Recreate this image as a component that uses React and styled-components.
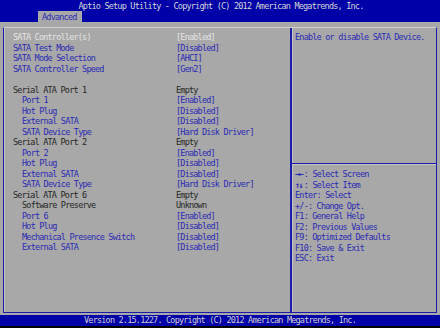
import React from "react";
import styled, { createGlobalStyle } from "styled-components";

const GlobalStyle = createGlobalStyle`
  html, body {
    margin: 0;
    padding: 0;
    background: #000;
  }
  body {
    font-family: "DejaVu Sans Mono", "Liberation Mono", monospace;
  }
`;

const BLUE = "#0000a8";
const GRAY = "#a8a8a8";
const LINK = "#2a2ab4";
const LINE = "#1c1caa";

const Screen = styled.div`
  width: 440px;
  height: 328px;
  display: flex;
  flex-direction: column;
  background: ${GRAY};
  font-size: 8.5px;
  letter-spacing: -0.8px;
  line-height: 10.5px;
  overflow: hidden;
`;

const Header = styled.div`
  background: ${BLUE};
  height: 22px;
  display: flex;
  flex-direction: column;
`;

const Title = styled.div`
  height: 11px;
  line-height: 13px;
  text-align: center;
  color: #d6d6d6;
  padding-left: 2px;
`;

const Tabs = styled.div`
  height: 11px;
  display: flex;
  padding-left: 38px;
`;

const Tab = styled.div`
  background: ${GRAY};
  color: ${LINK};
  padding: 0 4px;
  line-height: 12px;
  width: 36px;
`;

const Body = styled.div`
  flex: 1;
  padding: 5px 3px 2px 3px;
  display: flex;
`;

const Frame = styled.div`
  flex: 1;
  display: flex;
  border: 1px solid ${LINE};
  border-top-color: #cfcfcf;
  box-shadow: inset 1px 0 0 #c4c4c4;
`;

const LeftPanel = styled.div`
  width: 288px;
  padding: 4px 0 0 9px;
  border-right: 2px solid ${LINE};
  box-shadow: 1px 0 0 #c4c4c4;
  box-sizing: border-box;
`;

const Row = styled.div`
  display: grid;
  grid-template-columns: 163px 1fr;
  height: 10.5px;
  white-space: nowrap;
`;

const tone = {
  selected: "#e4e4e4",
  link: LINK,
  plain: "#262626",
};

const Label = styled.span`
  color: ${(p) => tone[p.$kind]};
  padding-left: ${(p) => (p.$indent ? 9 : 0)}px;
`;

const Value = styled.span`
  color: ${(p) => tone[p.$kind]};
`;

const RightPanel = styled.div`
  flex: 1;
  display: flex;
  flex-direction: column;
  padding-left: 3px;
`;

const Help = styled.div`
  color: ${LINK};
  padding-top: 4px;
  height: 131px;
  border-bottom: 1px solid ${LINE};
  box-shadow: 0 1px 0 #c4c4c4;
  margin-left: -3px;
  padding-left: 3px;
`;

const Keys = styled.div`
  color: ${LINK};
  padding-top: 5px;
`;

const KeyLine = styled.div`
  height: 10.5px;
  white-space: nowrap;
`;

const Arrows = styled.b`
  font-weight: bold;
  letter-spacing: -1.5px;
  margin-right: 1.5px;
`;

const Footer = styled.div`
  height: 11px;
  background: ${BLUE};
  color: #cfcfcf;
  text-align: center;
  line-height: 11px;
  border-bottom: 2px solid #000;
`;

const rows = [
  { label: "SATA Controller(s)", value: "[Enabled]", kind: "selected" },
  { label: "SATA Test Mode", value: "[Disabled]", kind: "link" },
  { label: "SATA Mode Selection", value: "[AHCI]", kind: "link" },
  { label: "SATA Controller Speed", value: "[Gen2]", kind: "link" },
  { label: "", value: "", kind: "plain" },
  { label: "Serial ATA Port 1", value: "Empty", kind: "plain" },
  { label: "Port 1", value: "[Enabled]", kind: "link", indent: true },
  { label: "Hot Plug", value: "[Disabled]", kind: "link", indent: true },
  { label: "External SATA", value: "[Disabled]", kind: "link", indent: true },
  { label: "SATA Device Type", value: "[Hard Disk Driver]", kind: "link", indent: true },
  { label: "Serial ATA Port 2", value: "Empty", kind: "plain" },
  { label: "Port 2", value: "[Enabled]", kind: "link", indent: true },
  { label: "Hot Plug", value: "[Disabled]", kind: "link", indent: true },
  { label: "External SATA", value: "[Disabled]", kind: "link", indent: true },
  { label: "SATA Device Type", value: "[Hard Disk Driver]", kind: "link", indent: true },
  { label: "Serial ATA Port 6", value: "Empty", kind: "plain" },
  { label: "Software Preserve", value: "Unknown", kind: "plain", indent: true },
  { label: "Port 6", value: "[Enabled]", kind: "link", indent: true },
  { label: "Hot Plug", value: "[Disabled]", kind: "link", indent: true },
  { label: "Mechanical Presence Switch", value: "[Disabled]", kind: "link", indent: true },
  { label: "External SATA", value: "[Disabled]", kind: "link", indent: true },
];

const keys = [
  { arrows: "\u2192\u2190", text: ": Select Screen" },
  { arrows: "\u2191\u2193", text: ": Select Item" },
  { text: "Enter: Select" },
  { text: "+/-: Change Opt." },
  { text: "F1: General Help" },
  { text: "F2: Previous Values" },
  { text: "F9: Optimized Defaults" },
  { text: "F10: Save & Exit" },
  { text: "ESC: Exit" },
];

export default function App() {
  return (
    <Screen>
      <GlobalStyle />
      <Header>
        <Title>Aptio Setup Utility - Copyright (C) 2012 American Megatrends, Inc.</Title>
        <Tabs>
          <Tab>Advanced</Tab>
        </Tabs>
      </Header>
      <Body>
        <Frame>
          <LeftPanel>
            {rows.map((r, i) => (
              <Row key={i}>
                <Label $kind={r.kind} $indent={r.indent}>{r.label}</Label>
                <Value $kind={r.kind}>{r.value}</Value>
              </Row>
            ))}
          </LeftPanel>
          <RightPanel>
            <Help>Enable or disable SATA Device.</Help>
            <Keys>
              {keys.map((k) => (
                <KeyLine key={k.text}>
                  {k.arrows && <Arrows>{k.arrows}</Arrows>}
                  {k.text}
                </KeyLine>
              ))}
            </Keys>
          </RightPanel>
        </Frame>
      </Body>
      <Footer>Version 2.15.1227. Copyright (C) 2012 American Megatrends, Inc.</Footer>
    </Screen>
  );
}
